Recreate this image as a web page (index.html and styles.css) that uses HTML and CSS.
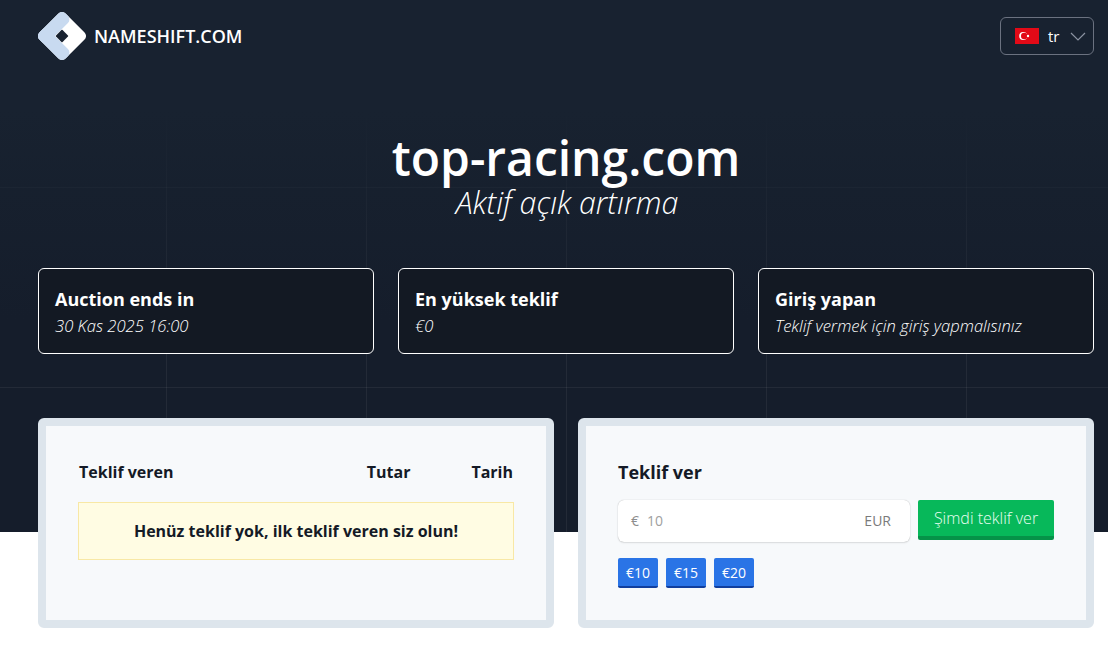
FILE: index.html
```html
<!DOCTYPE html>
<html lang="tr">
<head>
<meta charset="utf-8">
<title>top-racing.com</title>
<link rel="stylesheet" href="styles.css">
</head>
<body>
<div class="hero">
  <header class="topbar">
    <a class="brand">
      <svg class="logo" width="48" height="48" viewBox="-24 -24 48 48">
        <g transform="rotate(-45)">
          <rect x="-18.45" y="-18.45" width="36.9" height="36.9" rx="5" fill="#fff"/>
          <rect x="-18.45" y="-18.45" width="36.9" height="13.4" rx="5" fill="#c8daf0"/>
          <rect x="-18.45" y="-18.45" width="13.4" height="36.9" rx="5" fill="#c8daf0"/>
          <rect x="-4.6" y="-4.6" width="9.2" height="9.2" rx=".8" fill="#182230"/>
        </g>
      </svg>
      <span class="brand-name">NAMESHIFT.COM</span>
    </a>
    <button class="lang">
      <svg class="flag" width="24" height="16" viewBox="0 0 24 16">
        <rect width="24" height="16" fill="#e30a17"/>
        <circle cx="8.2" cy="8" r="4" fill="#fff"/>
        <circle cx="9.2" cy="8" r="3.2" fill="#e30a17"/>
        <circle cx="13" cy="8" r="1.2" fill="#fff"/>
      </svg>
      <span class="lang-code">tr</span>
      <svg class="chev" width="16" height="9" viewBox="0 0 16 9"><path d="M1 1l7 7 7-7" fill="none" stroke="#8b93a1" stroke-width="1.2"/></svg>
    </button>
  </header>
  <div class="title-block">
    <h1>top-racing.com</h1>
    <p class="sub">Aktif açık artırma</p>
  </div>
  <div class="stats">
    <div class="stat"><h3>Auction ends in</h3><p>30 Kas 2025 16:00</p></div>
    <div class="stat"><h3>En yüksek teklif</h3><p>€0</p></div>
    <div class="stat"><h3>Giriş yapan</h3><p>Teklif vermek için giriş yapmalısınız</p></div>
  </div>
</div>
<main class="panels">
  <section class="panel">
    <div class="bid-head"><span class="c-name">Teklif veren</span><span class="c-amt">Tutar</span><span class="c-date">Tarih</span></div>
    <div class="notice">Henüz teklif yok, ilk teklif veren siz olun!</div>
  </section>
  <section class="panel">
    <h2>Teklif ver</h2>
    <div class="bid-row">
      <div class="field"><span class="cur">€</span><span class="ph">10</span><span class="eur">EUR</span></div>
      <button class="go">Şimdi teklif ver</button>
    </div>
    <div class="quick">
      <button class="q">€10</button><button class="q">€15</button><button class="q">€20</button>
    </div>
  </section>
</main>
</body>
</html>
```
FILE: styles.css
```css
* { box-sizing: border-box; }
html, body { margin: 0; padding: 0; }
body { font-family: "Open Sans", sans-serif; background: #fff; color: #141a26; height: 648px; overflow: hidden; }
.hero {
  height: 532px;
  padding: 0 14px 0 38px;
  background-color: #151d2b;
  background-image:
    linear-gradient(#182230 110px, rgba(24,34,48,0) 320px),
    linear-gradient(rgba(255,255,255,.06) 1px, transparent 1px),
    linear-gradient(90deg, rgba(255,255,255,.06) 1px, transparent 1px);
  background-size: 100% 100%, 200px 200px, 200px 200px;
  background-position: 0 0, 0 -13px, -34px 0;
}
.topbar { display: flex; justify-content: space-between; align-items: flex-start; height: 130px; }
.brand { display: flex; align-items: center; margin-top: 12px; color: #fff; }
.logo { display: block; margin-right: 8px; }
.brand-name { font-size: 18px; font-weight: 600; }
.lang { display: flex; align-items: center; width: 94px; height: 38px; margin-top: 17px; padding: 0 0 0 14px; background: transparent; border: 1px solid #6b7280; border-radius: 6px; color: #fff; font: inherit; }
.flag { display: block; }
.lang-code { margin-left: 9px; font-size: 15px; }
.chev { margin-left: 11px; }
.title-block { text-align: center; color: #fff; }
h1 { margin: 0; font-size: 48px; line-height: 56px; font-weight: 600; }
.sub { margin: 0 0 0 2px; font-size: 30.4px; line-height: 34px; font-weight: 300; font-style: italic; }
.stats { display: flex; gap: 24px; margin: 48px 0 0; }
.stat { flex: 1; height: 86px; padding: 19px 16px; background: #131923; border: 1px solid #fff; border-radius: 6px; color: #fff; }
.stat h3 { margin: 0; font-size: 18px; line-height: 22px; font-weight: 700; }
.stat p { margin: 6px 0 0; font-size: 16.6px; line-height: 20px; font-weight: 300; font-style: italic; }
.panels { display: flex; gap: 24px; margin: -114px 14px 0 38px; position: relative; }
.panel { flex: 1; height: 210px; padding: 34px 32px; background: #f7f9fb; border: 8px solid #dde5ec; border-radius: 6px; }
.bid-head { display: flex; padding: 0 1px; font-size: 16px; font-weight: 700; line-height: 24px; }
.c-name { flex: 1; }
.c-amt { margin-right: 61px; }
.notice { display: flex; align-items: center; justify-content: center; height: 58px; margin-top: 18px; background: #fffce3; border: 1px solid #f8e8a5; font-size: 16px; font-weight: 700; }
h2 { margin: 0; font-size: 18px; line-height: 24px; font-weight: 700; }
.bid-row { display: flex; gap: 8px; margin-top: 16px; }
.field { display: flex; align-items: center; width: 292px; height: 42px; padding: 0 19px 2px 13px; background: #fff; border-radius: 6px; box-shadow: 0 0 1px rgba(0,0,0,.3), 0 1px 2px rgba(0,0,0,.1); font-size: 14px; }
.cur { color: #8d8d8d; }
.ph { margin-left: 8px; flex: 1; color: #a0a0a0; }
.eur { color: #7a7a7a; }
.go { width: 136px; height: 40px; background: #07b85a; border: 0; border-bottom: 4px solid #059248; border-radius: 2px; color: #e9fff2; font: inherit; font-size: 16px; font-weight: 300; padding: 0; }
.quick { display: flex; gap: 8px; margin-top: 16px; }
.q { width: 40px; height: 30px; padding: 0; background: #2a74e6; border: 0; border-bottom: 2px solid #113f9e; border-radius: 2px; color: #fff; font: inherit; font-size: 14px; }
```
